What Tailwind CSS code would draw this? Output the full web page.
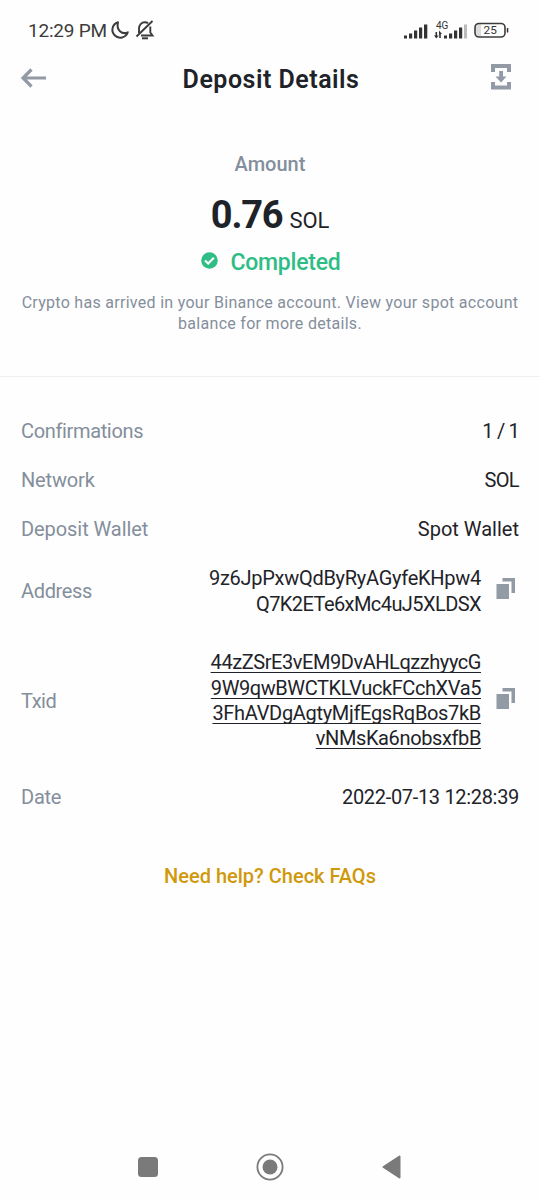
<!DOCTYPE html>
<html lang="en">
<head>
<meta charset="utf-8">
<title>Deposit Details</title>
<script src="https://cdn.jsdelivr.net/npm/@tailwindcss/browser@4"></script>
</head>
<body class="w-[540px] h-[1200px] overflow-hidden bg-[#fefefe] font-['Roboto',sans-serif] text-[#1e2329] flex flex-col">
  <header class="h-[60px] shrink-0 flex items-center justify-between pl-[28px] pr-[31px] text-[#3c3c3c]">
    <div class="flex items-center">
      <span class="pt-[2px] text-[19px] leading-6 whitespace-nowrap tracking-[-0.22px]">12:29 PM</span>
      <svg class="w-[20px] h-[20px] ml-[3px]" viewBox="0 0 20 20" fill="none" stroke="currentColor" stroke-width="2" stroke-linejoin="round"><path d="M8 2.200A7.900 7.900 0 1 0 17.800 12.300C12 15 6 10 8 2.200Z"/></svg>
      <svg class="w-[20px] h-[20px] ml-[5px]" viewBox="0 0 20 20" fill="none" stroke="currentColor" stroke-width="1.900"><path d="M4 13V8.500C4 5 6.500 2.300 9.800 2.300C11 2.300 12.200 2.600 13 3.300M15.300 6.500V12.500L17.500 15.500H6M1.500 16.500L17.500 1"/><path d="M7 18.300h6" stroke-width="2"/></svg>
    </div>
    <svg class="w-[106px] h-[24px]" viewBox="0 0 106 24" fill="#333">
      <path d="M1 17.500h3v3H1zM6 15.500h3.200v5H6zM11 12.500h3.200v8h-3.200zM16 9.500h3.200v11h-3.200zM21 6.500h3.300v14h-3.300z"/>
      <text x="33" y="10.500" font-size="10" font-family="Roboto">4G</text>
      <path d="M32.500 14h1.600v3.500h1.600l-2.400 3l-2.300-3h1.500zM36.200 20v-3.500h-.2v-4l3 3.500h-1.200v4zM41 17.500h3v3h-3zM46 15.500h3.200v5H46zM51 12.500h3.200v8h-3.200zM56 9.500h3.200v11h-3.200z"/>
      <path d="M61 6.500h3v14h-3z" fill="#bbb"/>
      <path d="M74 6h4v13h-4q-2 0-2-3V9q0-3 2-3z" fill="#ddd"/>
      <rect x="72" y="5.500" width="30" height="13.500" rx="4" fill="none" stroke="#3c3c3c" stroke-width="1.600"/>
      <path d="M103.800 10h1.500v4.500h-1.500z"/>
      <text x="80.500" y="16.300" font-size="11.800" font-family="Roboto">25</text>
    </svg>
  </header>
  <nav class="h-[38px] shrink-0 grid grid-cols-[60px_1fr_60px] items-center pl-[20px] pr-[28px]">
    <svg class="w-[27px] h-[20px] -mt-[2px]" viewBox="0 0 27 20" fill="none" stroke="#929aa5" stroke-width="3.200"><path d="M26 10H3M11.500 1.500L3 10L11.500 18.500"/></svg>
    <h1 class="pl-[10px] pt-px text-center text-[25px] leading-8 font-semibold tracking-[0.5px]">Deposit Details</h1>
    <svg class="w-[22px] h-[26px] justify-self-end -mt-[4px]" viewBox="0 0 22 26" fill="#929aa5"><path d="M1 0H21V8H17V4H5V8H1ZM1 18H5V21.500H17V18H21V25.500H1ZM9.200 7h3.800v5.500H16.500l-5.400 6l-5.600-6h3.700z"/></svg>
  </nav>
  <main class="flex-1 flex flex-col">
    <section class="h-[279px] shrink-0 border-b border-[#f0f1f3] flex flex-col items-center text-center">
      <p class="mt-[52px] text-[20px] leading-7 font-medium text-[#848e9c]">Amount</p>
      <div class="mt-[15px] h-[44px] flex items-baseline gap-[7px]">
        <strong class="text-[38px] leading-[44px] font-bold tracking-[-1.2px]">0.76</strong>
        <span class="text-[22px] tracking-[-0.1px]">SOL</span>
      </div>
      <div class="mt-[10px] h-[28px] pl-[2px] flex items-center gap-[12px] text-[#2ebd85]">
        <svg class="w-[17px] h-[17px] -mt-[2px]" viewBox="0 0 17 17"><circle cx="8.500" cy="8.500" r="8.300" fill="#2ebd85"/><path d="M4 8.500L7.200 11.500L12.800 5.800" fill="none" stroke="#fff" stroke-width="2.200"/></svg>
        <span class="pt-[3px] text-[23px] leading-7 font-medium tracking-[-0.22px]">Completed</span>
      </div>
      <p class="mt-[17px] text-[16px] leading-[21px] text-[#848e9c] whitespace-nowrap tracking-[0.29px]">Crypto has arrived in your Binance account. View your spot account<br>balance for more details.</p>
    </section>
    <dl class="pt-[30px] px-[21px] text-[20px] leading-[25px] [&_dt]:text-[#848e9c] [&_dd]:text-right">
      <div class="h-[49px] flex items-center justify-between"><dt class="tracking-[-0.35px]">Confirmations</dt><dd class="tracking-[-0.8px]">1 / 1</dd></div>
      <div class="h-[49px] flex items-center justify-between"><dt class="tracking-[-0.15px]">Network</dt><dd class="tracking-[-0.6px]">SOL</dd></div>
      <div class="h-[49px] flex items-center justify-between"><dt class="tracking-[-0.07px]">Deposit Wallet</dt><dd>Spot Wallet</dd></div>
      <div class="h-[75px] flex items-center justify-between"><dt class="tracking-[-0.35px]">Address</dt>
        <dd class="flex items-center gap-[15px] pr-[4px]"><span class="leading-[25.4px]"><span class="tracking-[-0.28px]">9z6JpPxwQdByRyAGyfeKHpw4</span><br><span class="tracking-[-0.57px]">Q7K2ETe6xMc4uJ5XLDSX</span></span>
          <svg class="w-[19px] h-[21px] -mt-[6px]" viewBox="0 0 19 21" fill="#929aa5"><path d="M0.500 6H13V21H0.500zM6.500 0H19V15H15.500V3.500H6.500z"/></svg></dd></div>
      <div class="h-[144px] flex items-center justify-between"><dt class="tracking-[-0.5px]">Txid</dt>
        <dd class="flex items-center gap-[15px] pr-[4px]"><span class="leading-[25.4px] underline decoration-1 underline-offset-[3px] [text-decoration-skip-ink:none]"><span class="tracking-[-0.44px]">44zZSrE3vEM9DvAHLqzzhyycG</span><br><span class="tracking-[-0.42px]">9W9qwBWCTKLVuckFCchXVa5</span><br><span class="tracking-[-0.32px]">3FhAVDgAgtyMjfEgsRqBos7kB</span><br><span class="tracking-[-0.38px]">vNMsKa6nobsxfbB</span></span>
          <svg class="w-[19px] h-[21px] -mt-[6px]" viewBox="0 0 19 21" fill="#929aa5"><path d="M0.500 6H13V21H0.500zM6.500 0H19V15H15.500V3.500H6.500z"/></svg></dd></div>
      <div class="h-[49px] flex items-center justify-between"><dt class="tracking-[-0.25px]">Date</dt><dd class="tracking-[-0.32px]">2022-07-13 12:28:39</dd></div>
    </dl>
    <p class="mt-[41px] text-center text-[20px] leading-[26px] font-medium text-[#d0980b]">Need help? Check FAQs</p>
  </main>
  <footer class="h-[66px] shrink-0 flex items-center justify-center gap-[98px] text-[#7a7a7a]">
    <svg class="w-[20px] h-[20px]" viewBox="0 0 20 20" fill="currentColor"><rect width="20" height="20" rx="3.500"/></svg>
    <svg class="w-[28px] h-[28px]" viewBox="0 0 28 28" fill="currentColor"><circle cx="14" cy="14" r="12.600" fill="none" stroke="currentColor" stroke-width="1.800"/><circle cx="14" cy="14" r="7.500"/></svg>
    <svg class="w-[20px] h-[24px]" viewBox="0 0 20 24" fill="currentColor" stroke="currentColor" stroke-width="2" stroke-linejoin="round"><path d="M17.500 1.500V22.500L1.500 12Z"/></svg>
  </footer>
</body>
</html>
